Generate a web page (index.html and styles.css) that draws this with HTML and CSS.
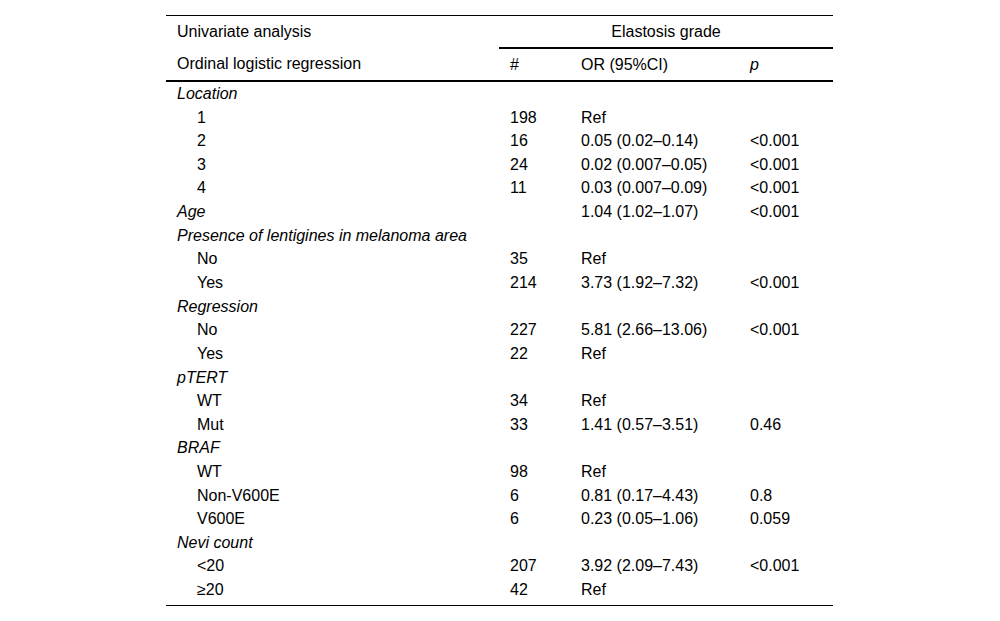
FILE: index.html
```html
<!DOCTYPE html>
<html>
<head>
<meta charset="utf-8">
<link rel="stylesheet" href="styles.css">
</head>
<body>
<table class="tbl">
  <colgroup>
    <col class="c1"><col class="c2"><col class="c3"><col class="c4">
  </colgroup>
  <thead>
    <tr class="h1">
      <th>Univariate analysis</th>
      <th colspan="3" class="group">Elastosis grade</th>
    </tr>
    <tr class="h2">
      <th>Ordinal logistic regression</th>
      <th>#</th>
      <th>OR (95%CI)</th>
      <th><i>p</i></th>
    </tr>
  </thead>
  <tbody>
    <tr class="cat"><td><i>Location</i></td><td></td><td></td><td></td></tr>
    <tr class="sub"><td>1</td><td>198</td><td>Ref</td><td></td></tr>
    <tr class="sub"><td>2</td><td>16</td><td>0.05 (0.02–0.14)</td><td>&lt;0.001</td></tr>
    <tr class="sub"><td>3</td><td>24</td><td>0.02 (0.007–0.05)</td><td>&lt;0.001</td></tr>
    <tr class="sub"><td>4</td><td>11</td><td>0.03 (0.007–0.09)</td><td>&lt;0.001</td></tr>
    <tr class="cat"><td><i>Age</i></td><td></td><td>1.04 (1.02–1.07)</td><td>&lt;0.001</td></tr>
    <tr class="cat"><td><i>Presence of lentigines in melanoma area</i></td><td></td><td></td><td></td></tr>
    <tr class="sub"><td>No</td><td>35</td><td>Ref</td><td></td></tr>
    <tr class="sub"><td>Yes</td><td>214</td><td>3.73 (1.92–7.32)</td><td>&lt;0.001</td></tr>
    <tr class="cat"><td><i>Regression</i></td><td></td><td></td><td></td></tr>
    <tr class="sub"><td>No</td><td>227</td><td>5.81 (2.66–13.06)</td><td>&lt;0.001</td></tr>
    <tr class="sub"><td>Yes</td><td>22</td><td>Ref</td><td></td></tr>
    <tr class="cat"><td><i>pTERT</i></td><td></td><td></td><td></td></tr>
    <tr class="sub"><td>WT</td><td>34</td><td>Ref</td><td></td></tr>
    <tr class="sub"><td>Mut</td><td>33</td><td>1.41 (0.57–3.51)</td><td>0.46</td></tr>
    <tr class="cat"><td><i>BRAF</i></td><td></td><td></td><td></td></tr>
    <tr class="sub"><td>WT</td><td>98</td><td>Ref</td><td></td></tr>
    <tr class="sub"><td>Non-V600E</td><td>6</td><td>0.81 (0.17–4.43)</td><td>0.8</td></tr>
    <tr class="sub"><td>V600E</td><td>6</td><td>0.23 (0.05–1.06)</td><td>0.059</td></tr>
    <tr class="cat"><td><i>Nevi count</i></td><td></td><td></td><td></td></tr>
    <tr class="sub"><td>&lt;20</td><td>207</td><td>3.92 (2.09–7.43)</td><td>&lt;0.001</td></tr>
    <tr class="sub last"><td>≥20</td><td>42</td><td>Ref</td><td></td></tr>
  </tbody>
</table>
</body>
</html>
```
FILE: styles.css
```css
html, body {
  margin: 0;
  padding: 0;
  background: #fff;
}
body {
  font-family: "Liberation Sans", Arial, sans-serif;
  font-size: 16px;
  color: #000;
}
.tbl {
  width: 667px;
  margin: 15px 0 0 166px;
  border-collapse: collapse;
  table-layout: fixed;
  border-top: 1px solid #000;
}
.c1 { width: 333px; }
.c2 { width: 71px; }
.c3 { width: 169px; }
.c4 { width: 94px; }
.tbl th {
  font-weight: normal;
  text-align: left;
  padding: 0 11px;
  line-height: 18px;
  vertical-align: middle;
}
.h1 th { height: 31px; }
.h1 th.group {
  text-align: center;
  border-bottom: 2px solid #000;
}
.h2 th {
  height: 31px;
  border-bottom: 2px solid #000;
}
.tbl td {
  padding: 0 11px;
  line-height: 18px;
  white-space: nowrap;
  vertical-align: middle;
}
.cat td { height: 24px; }
.sub td { height: 23.45px; }
.sub td:first-child { padding-left: 31px; }
.last td {
  height: 23px;
  padding-bottom: 4px;
  border-bottom: 1px solid #000;
}
```
